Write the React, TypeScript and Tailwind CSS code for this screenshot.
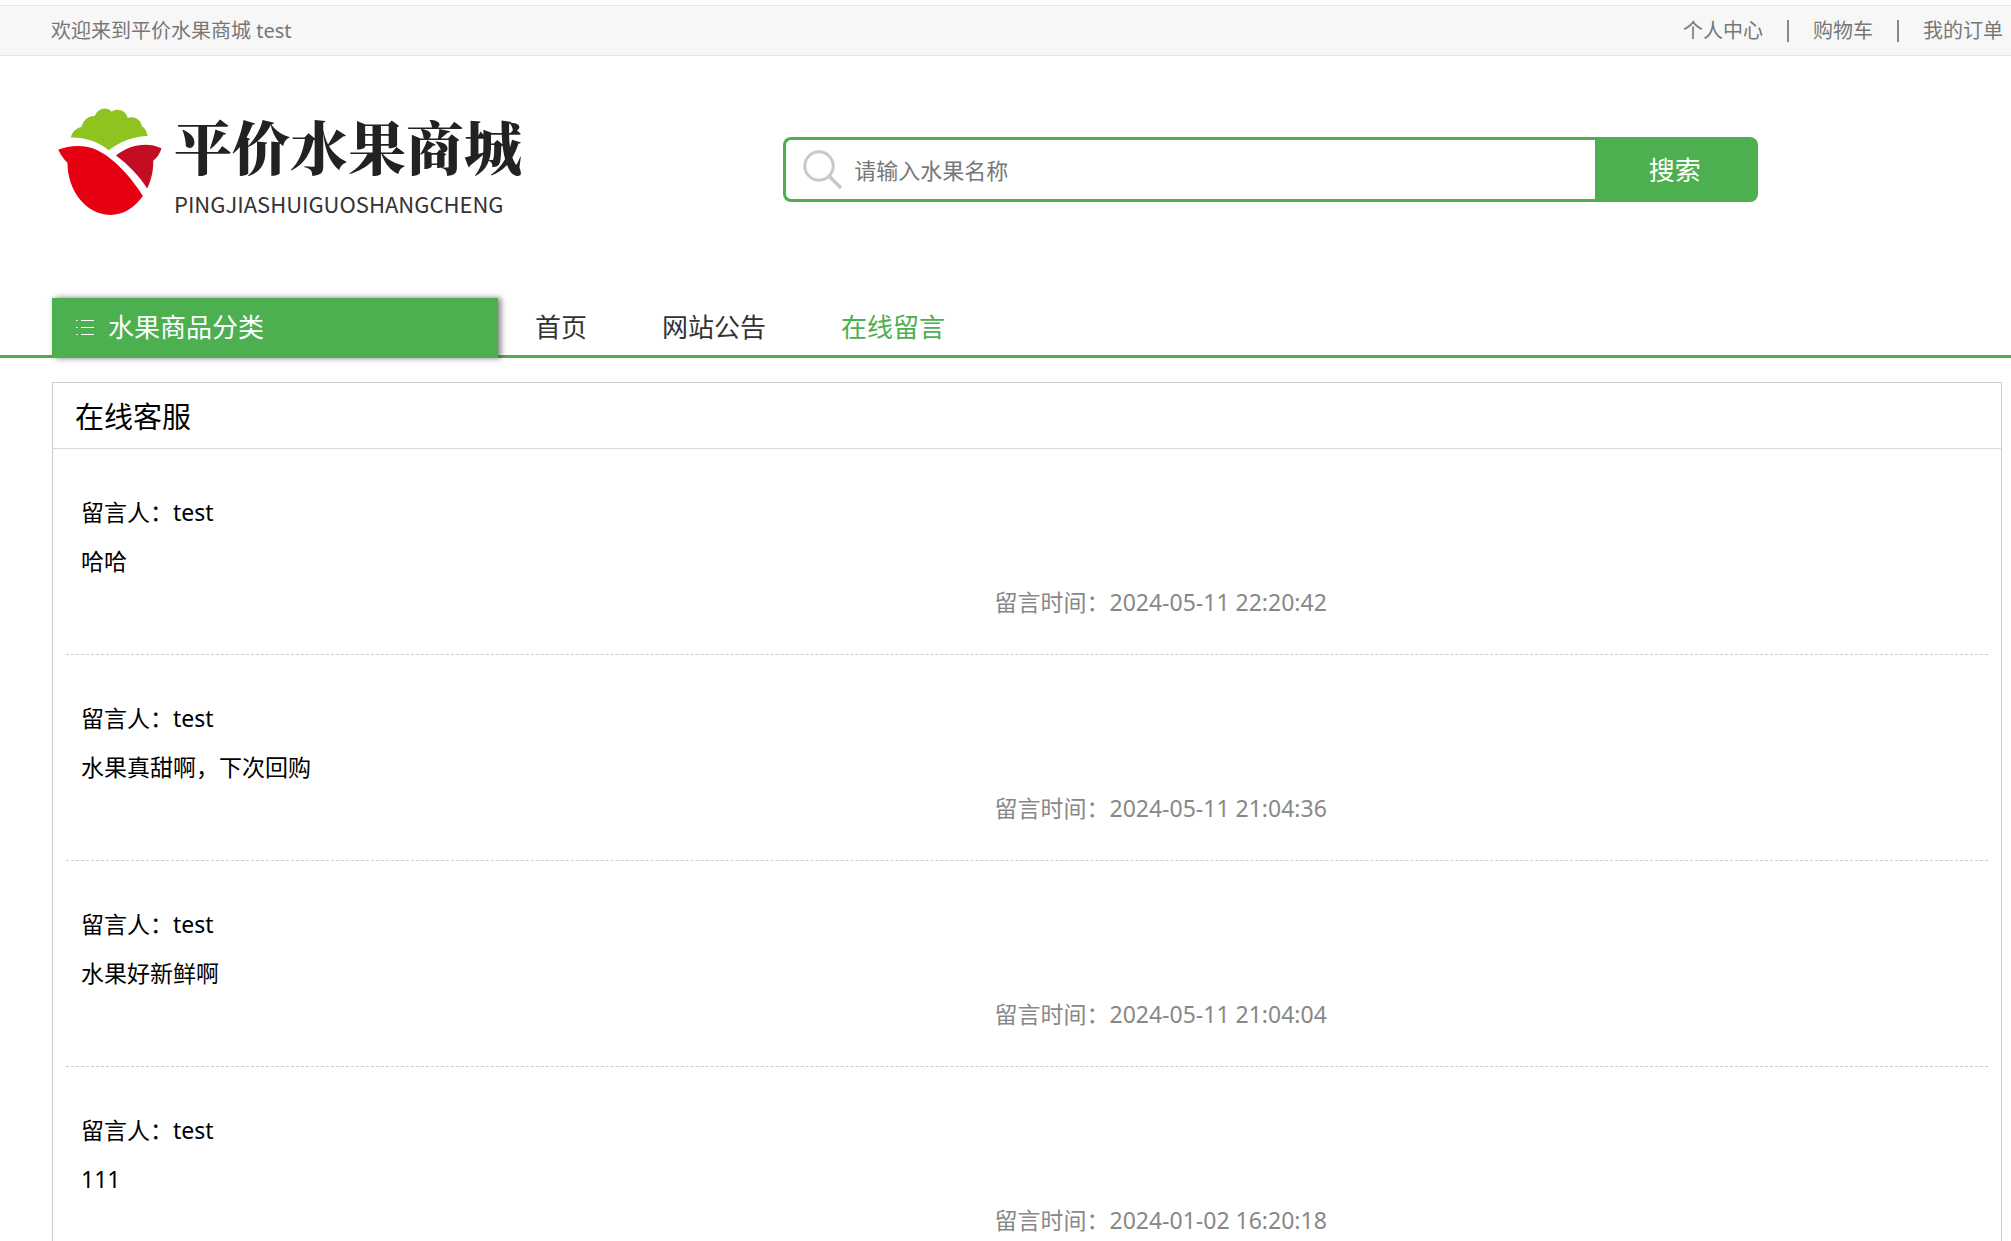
import React from "react";

type Message = { author: string; text: string; time: string };

const messages: Message[] = [
  { author: "test", text: "哈哈", time: "2024-05-11 22:20:42" },
  { author: "test", text: "水果真甜啊，下次回购", time: "2024-05-11 21:04:36" },
  { author: "test", text: "水果好新鲜啊", time: "2024-05-11 21:04:04" },
  { author: "test", text: "111", time: "2024-01-02 16:20:18" },
];

const navLinks = [
  { label: "首页", active: false },
  { label: "网站公告", active: false },
  { label: "在线留言", active: true },
];

function TopBar() {
  return (
    <div className="mt-[5px] flex h-[51px] items-center justify-between border-y border-[#e6e6e6] bg-[#f7f7f7] pr-2 pl-[51px] text-[20px] leading-6 text-[#777]">
      <span>欢迎来到平价水果商城 test</span>
      <nav className="flex items-center gap-6">
        <a href="#center">个人中心</a>
        <span className="h-[22px] w-0.5 bg-[#888]" />
        <a href="#cart">购物车</a>
        <span className="h-[22px] w-0.5 bg-[#888]" />
        <a href="#orders">我的订单</a>
      </nav>
    </div>
  );
}

function LogoMark() {
  return (
    <svg className="h-[107px] w-[104px] shrink-0" viewBox="54 54 312 322" aria-hidden="true">
      <path
        fill="#8fc31f"
        d="M92 143 C95 127 107 115 124 111 C129 92 143 78 164 78 C172 55 200 47 215 65 C232 53 258 60 263 84 C285 77 303 90 306 109 C315 114 321 125 323 138 C280 139 240 155 206 181 C175 156 135 142 92 143 Z"
      />
      <path
        fill="#e60012"
        d="M54 180 C88 166 133 163 172 181 C222 205 275 263 309 319 C284 353 252 376 210 376 C135 374 82 300 82 219 C72 210 62 196 54 180 Z"
      />
      <path
        fill="#c30d23"
        d="M228 197 C268 165 320 155 365 175 C361 190 352 203 340 213 C341 243 334 272 322 296 C297 257 264 224 228 197 Z"
      />
    </svg>
  );
}

function Header() {
  return (
    <header className="mb-[15px] flex h-[227px] items-center pr-[9px] pl-[52px]">
      <a href="#home" className="flex w-[37.5%] shrink-0 items-center gap-3 pb-4 pl-[6px]">
        <LogoMark />
        <span className="flex flex-col gap-1.5 whitespace-nowrap">
          <span className="font-['Noto_Serif_CJK_SC','Noto_Sans_CJK_SC',serif] text-[58px] leading-[76px] font-black text-[#222]">
            平价水果商城
          </span>
          <span className="font-['Noto_Sans_CJK_SC',sans-serif] text-[22px] leading-7 text-[#333]">
            PINGJIASHUIGUOSHANGCHENG
          </span>
        </span>
      </a>
      <form className="flex h-[65px] w-1/2" onSubmit={(e) => e.preventDefault()}>
        <div className="flex min-w-0 flex-1 items-center gap-[11px] rounded-l-lg border-[3px] border-r-0 border-[#4caf50] pl-[17px]">
          <svg className="size-10 shrink-0" viewBox="0 0 40 40" fill="none" stroke="#c8c8c8" strokeWidth="3" aria-hidden="true">
            <circle cx="16" cy="16" r="14.2" />
            <path d="M26 26 L38 38" strokeWidth="3.4" />
          </svg>
          <input
            type="text"
            aria-label="请输入水果名称"
            placeholder="请输入水果名称"
            className="h-full min-w-0 flex-1 text-[22px] outline-none placeholder:text-[#777]"
          />
        </div>
        <button type="submit" className="w-[163px] shrink-0 rounded-r-lg bg-[#4caf50] pt-0.5 pr-1 text-[26px] text-white">
          搜索
        </button>
      </form>
    </header>
  );
}

function NavBar() {
  return (
    <nav className="flex h-[60px] border-b-[3px] border-[#4caf50] pl-[52px] text-[26px] leading-[58px]">
      <button
        type="button"
        className="flex h-[60px] w-[446px] shrink-0 items-center gap-[14px] bg-[#4caf50] pb-0.5 pl-6 text-white shadow-[3px_0_6px_rgba(0,0,0,0.5)]"
      >
        <svg className="h-[18px] w-[18px]" viewBox="0 0 18 18" fill="none" stroke="#fff" strokeWidth="1.2" aria-hidden="true">
          <path d="M5 2.5H18M5 9.5H18M5 16.5H18M0 2.5H1.6M0 9.5H1.6M0 16.5H1.6" />
        </svg>
        水果商品分类
      </button>
      <ul className="flex gap-[75px] pl-[37px] text-[#333]">
        {navLinks.map((link) => (
          <li key={link.label}>
            <a href={`#${link.label}`} className={link.active ? "text-[#4caf50]" : ""}>
              {link.label}
            </a>
          </li>
        ))}
      </ul>
    </nav>
  );
}

function MessageItem({ message }: { message: Message }) {
  return (
    <li className="border-b border-dashed border-[#ccc] pt-[39px] pb-9 pl-[15px]">
      <p className="leading-[49px]">留言人：{message.author}</p>
      <p className="leading-[49px]">{message.text}</p>
      <p className="ml-[calc(50%-40px)] leading-8 text-[#888]">留言时间：{message.time}</p>
    </li>
  );
}

export default function App() {
  return (
    <div className="flow-root bg-white font-['Noto_Sans','Noto_Sans_CJK_SC',sans-serif] text-black">
      <TopBar />
      <Header />
      <NavBar />
      <main className="mt-6 mr-[9px] ml-[52px] border border-[#ccc]">
        <h1 className="border-b border-[#d9d9d9] pt-0.5 pl-[22px] text-[29px] leading-[63px]">在线客服</h1>
        <ul className="px-[13px] text-[23px]">
          {messages.map((message) => (
            <MessageItem key={message.time} message={message} />
          ))}
        </ul>
      </main>
    </div>
  );
}
